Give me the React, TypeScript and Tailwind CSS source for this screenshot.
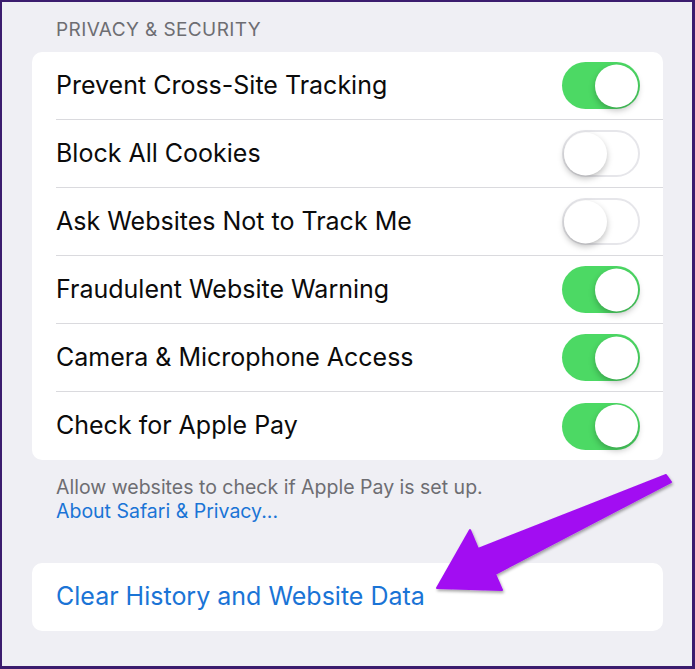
import { useState } from "react";

const rows = [
  { label: "Prevent Cross-Site Tracking", on: true },
  { label: "Block All Cookies", on: false },
  { label: "Ask Websites Not to Track Me", on: false },
  { label: "Fraudulent Website Warning", on: true },
  { label: "Camera & Microphone Access", on: true },
  { label: "Check for Apple Pay", on: true },
];

function Toggle({ on, onClick }: { on: boolean; onClick: () => void }) {
  return (
    <button
      onClick={onClick}
      className={`relative w-[78px] h-[47px] rounded-full shrink-0 ${
        on ? "bg-[#4cd964]" : "bg-white border-2 border-[#e6e6ea]"
      }`}
    >
      <span
        className={`absolute top-1/2 -translate-y-1/2 w-[43px] h-[43px] rounded-full bg-white shadow-[0_3px_6px_rgba(0,0,0,0.25)] ${
          on ? "right-[2px]" : "left-0"
        }`}
      />
    </button>
  );
}

export default function App() {
  const [toggles, setToggles] = useState(rows.map((r) => r.on));

  return (
    <div
      className="relative w-[695px] h-[669px] overflow-hidden bg-[#efeff4] border-2 border-r-[3px] border-b-[3px] border-[#3b1c6e] pl-[30px] pr-[29px]"
      style={{ fontFamily: "Inter, 'Liberation Sans', sans-serif" }}
    >
      <div className="pt-[16px] pl-[24px] text-[19px] leading-[24px] tracking-[0.4px] text-[#6d6d72]">
        PRIVACY &amp; SECURITY
      </div>

      <div className="mt-[10px] bg-white rounded-[10px]">
        {rows.map((row, i) => (
          <div key={row.label} className="pl-[24px]">
            <div
              className={`h-[68px] flex items-center justify-between pr-[23px] ${
                i < rows.length - 1 ? "border-b border-[#dadade]" : ""
              }`}
            >
              <span className="text-[25px] text-[#0b0b0b]">{row.label}</span>
              <Toggle
                on={toggles[i]}
                onClick={() =>
                  setToggles(toggles.map((t, j) => (j === i ? !t : t)))
                }
              />
            </div>
          </div>
        ))}
      </div>

      <div className="pt-[15px] pl-[24px] text-[19.5px] leading-[24px]">
        <div className="text-[#6d6d72]">
          Allow websites to check if Apple Pay is set up.
        </div>
        <div className="text-[#1a74d6]">About Safari &amp; Privacy...</div>
      </div>

      <div className="mt-[40px] h-[68px] bg-white rounded-[10px] pl-[24px] flex items-center">
        <span className="text-[25px] text-[#1a74d6]">
          Clear History and Website Data
        </span>
      </div>

      <svg
        className="absolute left-0 top-0 pointer-events-none"
        width="695"
        height="669"
        viewBox="0 0 695 669"
      >
        <defs>
          <filter id="sh" x="-10%" y="-10%" width="120%" height="130%">
            <feDropShadow dx="1" dy="2" stdDeviation="1.5" floodColor="#000" floodOpacity="0.35" />
          </filter>
        </defs>
        <polygon
          points="666,475 671,482 495,574 502,590 437,588 470,530 478,549"
          fill="#a20ff2"
          strokeLinejoin="round"
          stroke="#a20ff2"
          strokeWidth="2"
          filter="url(#sh)"
          transform="translate(-2,-2)"
        />
      </svg>
    </div>
  );
}
